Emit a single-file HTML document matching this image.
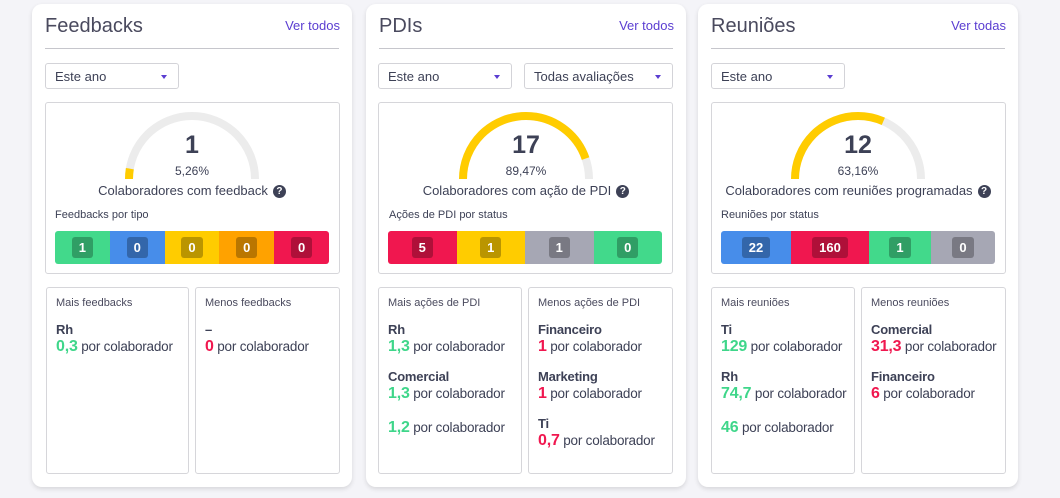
<!DOCTYPE html><html><head><meta charset="utf-8"><style>
*{box-sizing:border-box;margin:0;padding:0}
body{width:1060px;height:498px;background:#f4f4f8;font-family:"Liberation Sans",sans-serif;color:#3d4156;position:relative;overflow:hidden}
.card{position:absolute;top:4px;width:320px;height:483px;background:#fff;border-radius:10px;box-shadow:0 2px 5px rgba(0,0,0,.12)}
.a{position:absolute}
.title{left:13px;top:11px;font-size:20px;color:#4a4a5e}
.ver{right:12px;top:14px;font-size:13px;color:#5a3dd1}
.hr{left:13px;top:44px;width:294px;height:1px;background:#c6c6cc}
.sel{top:59px;height:26px;border:1px solid #d3d3d8;border-radius:3px;font-size:13px;padding:5px 9px;color:#3d4156}
.sel:after{content:"";position:absolute;right:11px;top:11px;border:3.5px solid transparent;border-top:4px solid #5a3dd1;border-bottom:0}
.gbox{left:13px;top:98px;width:295px;height:172px;border:1px solid #d6d6da;border-radius:3px}
.num{left:0;width:320px;text-align:center;top:127px;font-size:25px;font-weight:bold;color:#3d4156}
.pct{left:0;width:320px;text-align:center;top:160px;font-size:12px}
.lab{left:0;width:320px;text-align:center;top:179px;font-size:13px}
.q{display:inline-block;width:13px;height:13px;border-radius:50%;background:#3d4156;color:#fff;font-size:10px;font-weight:bold;line-height:13px;text-align:center;vertical-align:1px;margin-left:5px}
.sub{left:23px;top:205px;font-size:11px}
.bar{left:23px;top:227px;width:274px;height:33px;display:flex;border-radius:3px;overflow:hidden}
.bar div{display:flex;align-items:center;justify-content:center}
.bar span{background:rgba(0,0,0,.27);color:#fff;font-weight:bold;font-size:13px;border-radius:3px;height:21px;line-height:21px;padding:0 7px}
.bb{top:283px;height:187px;border:1px solid #d6d6da;border-radius:3px;padding:9px 9px;white-space:nowrap}
.bb h4{font-weight:normal;font-size:11px;color:#4a4a5e;margin-bottom:12px}
.bb b{display:block;font-size:13px;color:#3d4156}
.it{font-size:13.5px;margin-bottom:13px;line-height:17px;letter-spacing:-0.2px}
.g{color:#3fd68a;font-size:16px;font-weight:bold}
.r{color:#f0174f;font-size:16px;font-weight:bold}
.G{background:#42d98b}.B{background:#478dea}.Y{background:#ffcc00}.O{background:#ffa200}.R{background:#f0174f}.S{background:#a6a7b4}
</style></head><body>

<div class="card" style="left:32px">
<div class="a title">Feedbacks</div><div class="a ver">Ver todos</div><div class="a hr"></div>
<div class="a sel" style="left:13px;width:134px">Este ano</div>
<div class="a gbox"></div>
<svg class="a" style="left:93px;top:108px" width="134" height="67"><path d="M4 67 A63 63 0 0 1 130 67" fill="none" stroke="#ececec" stroke-width="8"/><path d="M4 67 A63 63 0 0 1 130 67" fill="none" stroke="#ffcc00" stroke-width="8" stroke-dasharray="10.4 300"/></svg>
<div class="a num">1</div><div class="a pct">5,26%</div>
<div class="a lab">Colaboradores com feedback<span class="q">?</span></div>
<div class="a sub">Feedbacks por tipo</div>
<div class="a bar"><div class="G" style="flex:1"><span>1</span></div><div class="B" style="flex:1"><span>0</span></div><div class="Y" style="flex:1"><span>0</span></div><div class="O" style="flex:1"><span>0</span></div><div class="R" style="flex:1"><span>0</span></div></div>
<div class="a bb" style="left:14px;width:143px"><h4>Mais feedbacks</h4><div class="it"><b>Rh</b><span class="g">0,3</span> por colaborador</div></div>
<div class="a bb" style="left:163px;width:145px"><h4>Menos feedbacks</h4><div class="it"><b>–</b><span class="r">0</span> por colaborador</div></div>
</div>

<div class="card" style="left:366px">
<div class="a title">PDIs</div><div class="a ver">Ver todos</div><div class="a hr"></div>
<div class="a sel" style="left:12px;width:134px">Este ano</div>
<div class="a sel" style="left:158px;width:149px">Todas avaliações</div>
<div class="a gbox" style="left:12px"></div>
<svg class="a" style="left:93px;top:108px" width="134" height="67"><path d="M4 67 A63 63 0 0 1 130 67" fill="none" stroke="#ececec" stroke-width="8"/><path d="M4 67 A63 63 0 0 1 130 67" fill="none" stroke="#ffcc00" stroke-width="8" stroke-dasharray="177 300"/></svg>
<div class="a num">17</div><div class="a pct">89,47%</div>
<div class="a lab">Colaboradores com ação de PDI<span class="q">?</span></div>
<div class="a sub">Ações de PDI por status</div>
<div class="a bar" style="left:22px"><div class="R" style="flex:1"><span>5</span></div><div class="Y" style="flex:1"><span>1</span></div><div class="S" style="flex:1"><span>1</span></div><div class="G" style="flex:1"><span>0</span></div></div>
<div class="a bb" style="left:12px;width:144px"><h4>Mais ações de PDI</h4><div class="it"><b>Rh</b><span class="g">1,3</span> por colaborador</div><div class="it"><b>Comercial</b><span class="g">1,3</span> por colaborador</div><div class="it" style="margin-top:17px"><span class="g">1,2</span> por colaborador</div></div>
<div class="a bb" style="left:162px;width:145px"><h4>Menos ações de PDI</h4><div class="it"><b>Financeiro</b><span class="r">1</span> por colaborador</div><div class="it"><b>Marketing</b><span class="r">1</span> por colaborador</div><div class="it"><b>Ti</b><span class="r">0,7</span> por colaborador</div></div>
</div>

<div class="card" style="left:698px">
<div class="a title">Reuniões</div><div class="a ver">Ver todas</div><div class="a hr"></div>
<div class="a sel" style="left:13px;width:134px">Este ano</div>
<div class="a gbox"></div>
<svg class="a" style="left:93px;top:108px" width="134" height="67"><path d="M4 67 A63 63 0 0 1 130 67" fill="none" stroke="#ececec" stroke-width="8"/><path d="M4 67 A63 63 0 0 1 130 67" fill="none" stroke="#ffcc00" stroke-width="8" stroke-dasharray="125 300"/></svg>
<div class="a num">12</div><div class="a pct">63,16%</div>
<div class="a lab">Colaboradores com reuniões programadas<span class="q">?</span></div>
<div class="a sub">Reuniões por status</div>
<div class="a bar"><div class="B" style="width:70px"><span>22</span></div><div class="R" style="width:78px"><span>160</span></div><div class="G" style="width:62px"><span>1</span></div><div class="S" style="flex:1"><span>0</span></div></div>
<div class="a bb" style="left:13px;width:144px"><h4>Mais reuniões</h4><div class="it"><b>Ti</b><span class="g">129</span> por colaborador</div><div class="it"><b>Rh</b><span class="g">74,7</span> por colaborador</div><div class="it" style="margin-top:17px"><span class="g">46</span> por colaborador</div></div>
<div class="a bb" style="left:163px;width:145px"><h4>Menos reuniões</h4><div class="it"><b>Comercial</b><span class="r">31,3</span> por colaborador</div><div class="it"><b>Financeiro</b><span class="r">6</span> por colaborador</div></div>
</div>
</body></html>
